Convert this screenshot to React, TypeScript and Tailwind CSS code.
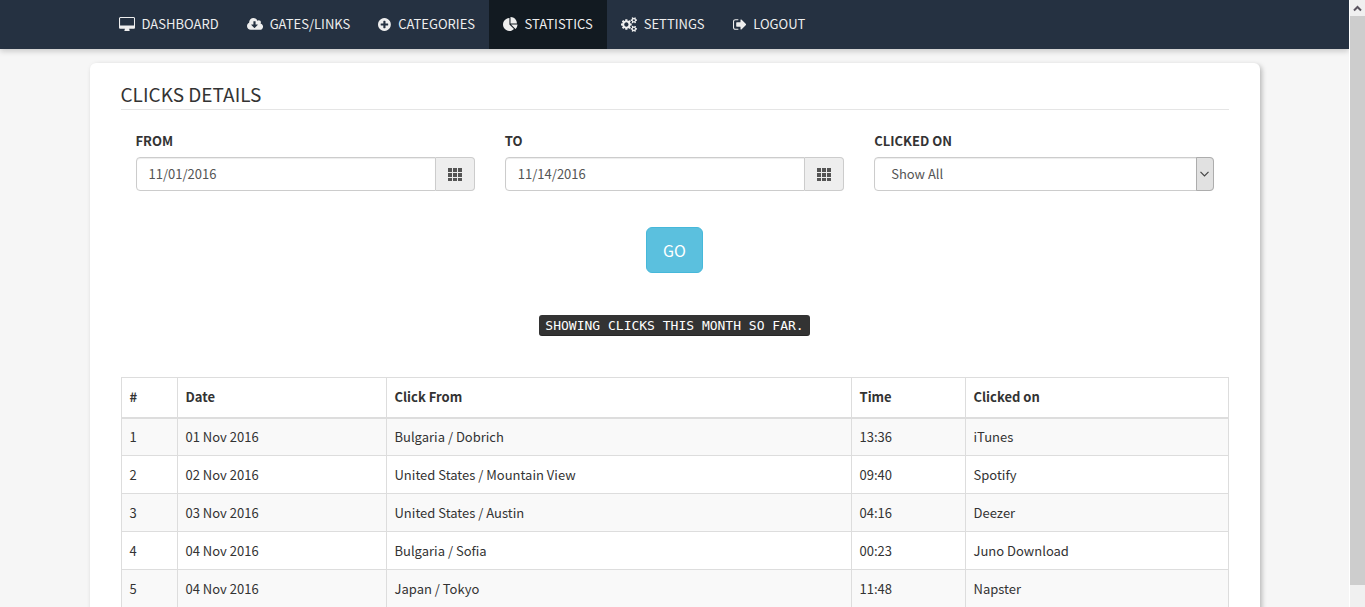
import React from "react";

type NavItem = {
    label: string;
    width: number;
    path: string;
    active?: boolean;
};

const navItems: NavItem[] = [
    {
        label: "Dashboard",
        width: 1920,
        path: "M1792 992v-832q0-13-9.5-22.5t-22.5-9.5h-1600q-13 0-22.5 9.5t-9.5 22.5v832q0 13 9.5 22.5t22.5 9.5h1600q13 0 22.5-9.5t9.5-22.5zm128-832v1088q0 66-47 113t-113 47h-544q0 37 16 77.5t32 71 16 43.5q0 26-19 45t-45 19h-512q-26 0-45-19t-19-45q0-14 16-44t32-70 16-78h-544q-66 0-113-47t-47-113v-1088q0-66 47-113t113-47h1600q66 0 113 47t47 113z",
    },
    {
        label: "Gates/Links",
        width: 1920,
        path: "M1280 928q0-14-9-23t-23-9h-224v-352q0-13-9.5-22.5t-22.5-9.5h-192q-13 0-22.5 9.5t-9.5 22.5v352h-224q-13 0-22.5 9.5t-9.5 22.5q0 14 9 23l352 352q9 9 23 9t23-9l351-351q10-12 10-24zm640 224q0 159-112.5 271.5t-271.5 112.5h-1088q-185 0-316.5-131.5t-131.5-316.5q0-130 70-240t188-165q-2-30-2-43 0-212 150-362t362-150q156 0 285.5 87t188.5 231q71-62 166-62 106 0 181 75t75 181q0 76-41 138 130 31 213.5 135.5t83.5 238.5z",
    },
    {
        label: "Categories",
        width: 1536,
        path: "M1216 960v-128q0-26-19-45t-45-19h-256v-256q0-26-19-45t-45-19h-128q-26 0-45 19t-19 45v256h-256q-26 0-45 19t-19 45v128q0 26 19 45t45 19h256v256q0 26 19 45t45 19h128q26 0 45-19t19-45v-256h256q26 0 45-19t19-45zm320-64q0 209-103 385.5t-279.5 279.5-385.5 103-385.5-103-279.5-279.5-103-385.5 103-385.5 279.5-279.5 385.5-103 385.5 103 279.5 279.5 103 385.5z",
    },
    {
        label: "Statistics",
        width: 1728,
        active: true,
        path: "M768 890l546 546q-106 108-247.5 168t-298.5 60q-209 0-385.5-103t-279.5-279.5-103-385.5 103-385.5 279.5-279.5 385.5-103v762zm187 6h773q0 157-60 298.5t-168 247.5zm709-128h-768v-768q209 0 385.5 103t279.5 279.5 103 385.5z",
    },
    {
        label: "Settings",
        width: 1920,
        path: "M896 896q0-106-75-181t-181-75-181 75-75 181 75 181 181 75 181-75 75-181zm768 512q0-52-38-90t-90-38-90 38-38 90q0 53 37.5 90.5t90.5 37.5 90.5-37.5 37.5-90.5zm0-1024q0-52-38-90t-90-38-90 38-38 90q0 53 37.5 90.5t90.5 37.5 90.5-37.5 37.5-90.5zm-384 421v185q0 10-7 19.5t-16 10.5l-155 24q-11 35-32 76 34 48 90 115 7 11 7 20 0 12-7 19-23 30-82.5 89.5t-78.5 59.5q-11 0-21-7l-115-90q-37 19-77 31-11 108-23 155-7 24-30 24h-186q-11 0-20-7.5t-10-17.5l-23-153q-34-10-75-31l-118 89q-7 7-20 7-11 0-21-8-144-133-144-160 0-9 7-19 10-14 41-53t47-61q-23-44-35-82l-152-24q-10-1-17-9.5t-7-19.5v-185q0-10 7-19.5t16-10.5l155-24q11-35 32-76-34-48-90-115-7-11-7-20 0-12 7-20 22-30 82-89t79-59q11 0 21 7l115 90q34-18 77-32 11-108 23-154 7-24 30-24h186q11 0 20 7.5t10 17.5l23 153q34 10 75 31l118-89q8-7 20-7 11 0 21 8 144 133 144 160 0 8-7 19-12 16-42 54t-45 60q23 48 34 82l152 23q10 2 17 10.5t7 19.5zm640 533v140q0 16-149 31-12 27-30 52 51 113 51 138 0 4-4 7-122 71-124 71-8 0-46-47t-52-68q-20 2-30 2t-30-2q-14 21-52 68t-46 47q-2 0-124-71-4-3-4-7 0-25 51-138-18-25-30-52-149-15-149-31v-140q0-16 149-31 13-29 30-52-51-113-51-138 0-4 4-7 4-2 35-20t59-34 30-16q8 0 46 46.5t52 67.5q20-2 30-2t30 2q51-71 92-112l6-2q4 0 124 70 4 3 4 7 0 25-51 138 17 23 30 52 149 15 149 31zm0-1024v140q0 16-149 31-12 27-30 52 51 113 51 138 0 4-4 7-122 71-124 71-8 0-46-47t-52-68q-20 2-30 2t-30-2q-14 21-52 68t-46 47q-2 0-124-71-4-3-4-7 0-25 51-138-18-25-30-52-149-15-149-31v-140q0-16 149-31 13-29 30-52-51-113-51-138 0-4 4-7 4-2 35-20t59-34 30-16q8 0 46 46.5t52 67.5q20-2 30-2t30 2q51-71 92-112l6-2q4 0 124 70 4 3 4 7 0 25-51 138 17 23 30 52 149 15 149 31z",
    },
    {
        label: "Logout",
        width: 1632,
        path: "M640 1440q0 4 1 20t.5 26.5-3 23.5-10 19.5-20.5 6.5h-320q-119 0-203.5-84.5t-84.5-203.5v-704q0-119 84.5-203.5t203.5-84.5h320q13 0 22.5 9.5t9.5 22.5q0 4 1 20t.5 26.5-3 23.5-10 19.5-20.5 6.5h-320q-66 0-113 47t-47 113v704q0 66 47 113t113 47h312l11.5 1 11.5 3 8 5.5 7 9 2 13.5zm928-544q0 26-19 45l-544 544q-19 19-45 19t-45-19-19-45v-288h-448q-26 0-45-19t-19-45v-384q0-26 19-45t45-19h448v-288q0-26 19-45t45-19 45 19l544 544q19 19 19 45z",
    },
];

const clicks = [
    { id: 1, date: "01 Nov 2016", from: "Bulgaria / Dobrich", time: "13:36", target: "iTunes" },
    { id: 2, date: "02 Nov 2016", from: "United States / Mountain View", time: "09:40", target: "Spotify" },
    { id: 3, date: "03 Nov 2016", from: "United States / Austin", time: "04:16", target: "Deezer" },
    { id: 4, date: "04 Nov 2016", from: "Bulgaria / Sofia", time: "00:23", target: "Juno Download" },
    { id: 5, date: "04 Nov 2016", from: "Japan / Tokyo", time: "11:48", target: "Napster" },
];

const NavBar: React.FC = () => {
    return (
        <nav className="relative bg-[#253141] shadow-[0_2px_6px_rgba(0,0,0,0.2)]">
            <div className="mx-auto flex h-[49px] w-full max-w-[1140px]">
                {navItems.map((item) => (
                    <a
                        key={item.label}
                        href="#"
                        className={`flex items-center gap-[7px] px-[14px] pb-px text-[13px] uppercase leading-5 text-[#eee] ${
                            item.active ? "bg-[#121a21]" : ""
                        }`}
                    >
                        <svg
                            viewBox={`0 0 ${item.width} 1792`}
                            className="h-[15px] w-auto shrink-0"
                            fill="currentColor"
                            aria-hidden="true"
                        >
                            <path d={item.path} />
                        </svg>
                        {item.label}
                    </a>
                ))}
            </div>
        </nav>
    );
};

type DateFieldProps = {
    id: string;
    label: string;
    value: string;
};

const DateField: React.FC<DateFieldProps> = ({ id, label, value }) => {
    return (
        <div className="px-[15px]">
            <label htmlFor={id} className="mb-[5px] block font-bold uppercase leading-[22px]">
                {label}
            </label>
            <div className="flex h-[34px]">
                <input
                    id={id}
                    type="text"
                    defaultValue={value}
                    className="w-full min-w-0 flex-1 rounded-l border border-[#ccc] bg-white px-3 text-[#555] shadow-[inset_0_1px_1px_rgba(0,0,0,0.075)]"
                />
                <button
                    type="button"
                    aria-label={`Pick ${label} date`}
                    className="flex w-[39px] items-center justify-center rounded-r border border-l-0 border-[#ccc] bg-[#eee] text-[#555]"
                >
                    <svg viewBox="0 0 14 14" className="size-[14px]" fill="currentColor" aria-hidden="true">
                        {[1, 6, 11].map((y) =>
                            [0, 5, 10].map((x) => (
                                <rect key={`${x}-${y}`} x={x} y={y} width="4" height={y === 11 ? 3 : 4} />
                            ))
                        )}
                    </svg>
                </button>
            </div>
        </div>
    );
};

const ClicksTable: React.FC = () => {
    return (
        <table className="mt-[41px] w-full table-fixed border-collapse border border-[#ddd] text-left leading-[21px]">
            <thead>
                <tr className="h-10 border-b-2 border-[#ddd]">
                    <th className="w-14 border-x border-[#ddd] px-2 pb-[2px]">#</th>
                    <th className="w-[209px] border-x border-[#ddd] px-2 pb-[2px]">Date</th>
                    <th className="border-x border-[#ddd] px-2 pb-[2px]">Click From</th>
                    <th className="w-[114px] border-x border-[#ddd] px-2 pb-[2px]">Time</th>
                    <th className="w-[263px] border-x border-[#ddd] px-2 pb-[2px]">Clicked on</th>
                </tr>
            </thead>
            <tbody>
                {clicks.map((click) => (
                    <tr key={click.id} className="h-[38px] odd:bg-[#f9f9f9]">
                        <td className="border border-[#ddd] px-2">{click.id}</td>
                        <td className="border border-[#ddd] px-2">{click.date}</td>
                        <td className="border border-[#ddd] px-2">{click.from}</td>
                        <td className="border border-[#ddd] px-2">{click.time}</td>
                        <td className="border border-[#ddd] px-2">{click.target}</td>
                    </tr>
                ))}
            </tbody>
        </table>
    );
};

const ScrollBar: React.FC = () => {
    return (
        <div className="flex w-4 shrink-0 flex-col border-l border-white bg-[#f0f0f0]" aria-hidden="true">
            <div className="flex h-4 items-center justify-center">
                <svg viewBox="0 0 9 7" className="h-[7px] w-[9px]" fill="none" stroke="#5b5560" strokeWidth="2">
                    <path d="M1 5.5 4.5 2 8 5.5" />
                </svg>
            </div>
            <div className="mb-[22px] flex-1 bg-[#cdcdcd]" />
        </div>
    );
};

const App: React.FC = () => {
    return (
        <div className="flex h-screen overflow-hidden bg-[#f6f6f6] font-['Noto_Sans_CJK_SC',sans-serif] text-[13px] text-[#333]">
            <div className="min-w-0 flex-1 overflow-hidden">
                <NavBar />
                <main className="mx-auto mt-[14px] w-full max-w-[1170px] rounded-md bg-white px-[31px] pb-8 pt-[19px] shadow-[2px_2px_5px_rgba(0,0,0,0.25)]">
                    <h1 className="border-b border-[#e5e5e5] pb-1 text-[19px] uppercase leading-[23px]">Clicks details</h1>
                    <form onSubmit={(e) => e.preventDefault()}>
                        <div className="mt-5 grid grid-cols-3">
                            <DateField id="from" label="From" value="11/01/2016" />
                            <DateField id="to" label="To" value="11/14/2016" />
                            <div className="px-[15px]">
                                <label htmlFor="clicked-on" className="mb-[5px] block font-bold uppercase leading-[22px]">
                                    Clicked on
                                </label>
                                <div className="relative h-[34px]">
                                    <select
                                        id="clicked-on"
                                        className="h-full w-full appearance-none rounded border border-[#ccc] bg-white px-4 text-[#555] shadow-[inset_0_1px_1px_rgba(0,0,0,0.075)]"
                                    >
                                        <option>Show All</option>
                                    </select>
                                    <span className="pointer-events-none absolute inset-y-0 right-0 flex w-[18px] items-center justify-center rounded-r border border-[#adadad] bg-[#e1e1e1]">
                                        <svg viewBox="0 0 9 6" className="h-[6px] w-[9px]" fill="none" stroke="#444" strokeWidth="1.2">
                                            <path d="M.5 .8 4.5 4.8 8.5 .8" />
                                        </svg>
                                    </span>
                                </div>
                            </div>
                        </div>
                        <div className="mt-9 flex justify-center">
                            <button
                                type="submit"
                                className="h-[46px] rounded-md border border-[#46b8da] bg-[#5bc0de] px-4 text-base uppercase text-white"
                            >
                                Go
                            </button>
                        </div>
                    </form>
                    <p className="mt-[42px] flex justify-center">
                        <kbd className="rounded-[3px] bg-[#333] px-[6px] font-['DejaVu_Sans_Mono',monospace] text-[13px] uppercase leading-[21px] text-white shadow-[inset_0_-1px_0_rgba(0,0,0,0.25)]">
                            Showing clicks this month so far.
                        </kbd>
                    </p>
                    <ClicksTable />
                </main>
            </div>
            <ScrollBar />
        </div>
    );
};

export default App;
